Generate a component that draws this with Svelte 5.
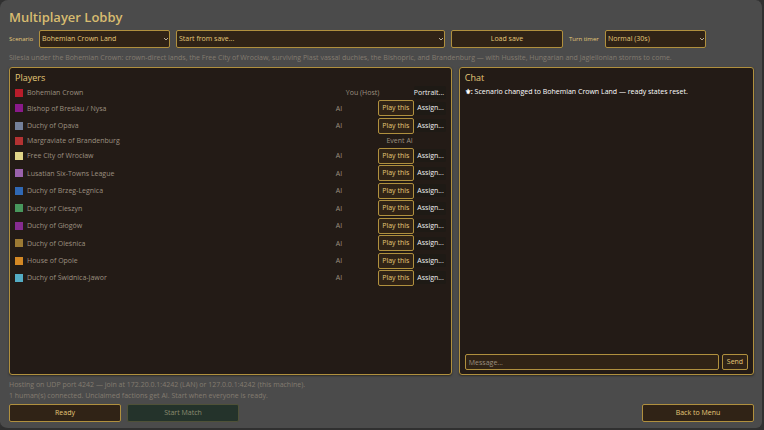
<script lang="ts">
  type Faction = { name: string; color: string; kind: 'host' | 'ai' | 'event' };

  const factions: Faction[] = [
    { name: 'Bohemian Crown', color: '#b81c2a', kind: 'host' },
    { name: 'Bishop of Breslau / Nysa', color: '#8a1a8a', kind: 'ai' },
    { name: 'Duchy of Opava', color: '#74809a', kind: 'ai' },
    { name: 'Margraviate of Brandenburg', color: '#b43232', kind: 'event' },
    { name: 'Free City of Wrocław', color: '#e0d488', kind: 'ai' },
    { name: 'Lusatian Six-Towns League', color: '#9a62ac', kind: 'ai' },
    { name: 'Duchy of Brzeg-Legnica', color: '#3068b4', kind: 'ai' },
    { name: 'Duchy of Cieszyn', color: '#48965c', kind: 'ai' },
    { name: 'Duchy of Głogów', color: '#862c90', kind: 'ai' },
    { name: 'Duchy of Oleśnica', color: '#9c7a34', kind: 'ai' },
    { name: 'House of Opole', color: '#d48824', kind: 'ai' },
    { name: 'Duchy of Świdnica-Jawor', color: '#54acc4', kind: 'ai' }
  ];

  const statusLabel = { host: 'You (Host)', ai: 'AI', event: 'Event AI' };

  let message = $state('');
</script>

{#snippet picker(id: string, value: string)}
  <div class="picker">
    <select {id} aria-label={value}><option>{value}</option></select>
    <svg viewBox="0 0 6 4" aria-hidden="true"><path d="M1 1l2 2 2-2" /></svg>
  </div>
{/snippet}

<main>
  <h1>Multiplayer Lobby</h1>

  <div class="setup">
    <label for="scenario">Scenario</label>
    <div class="scenario">{@render picker('scenario', 'Bohemian Crown Land')}</div>
    <div class="save">{@render picker('save', 'Start from save...')}</div>
    <button class="wide">Load save</button>
    <label class="timer-label" for="timer">Turn timer</label>
    <div class="timer">{@render picker('timer', 'Normal (30s)')}</div>
  </div>

  <p class="blurb">Silesia under the Bohemian Crown: crown-direct lands, the Free City of Wrocław, surviving Piast vassal duchies, the Bishopric, and Brandenburg — with Hussite, Hungarian and Jagiellonian storms to come.</p>

  <div class="panels">
    <section class="panel">
      <h2>Players</h2>
      <ul>
        {#each factions as f (f.name)}
          <li class={f.kind}>
            <span class="swatch" style="background: {f.color}"></span>
            <span class="name">{f.name}</span>
            <span class="status">{statusLabel[f.kind]}</span>
            {#if f.kind === 'ai'}
              <button class="play">Play this</button>
              <button class="flat">Assign...</button>
            {:else if f.kind === 'host'}
              <button class="flat">Portrait...</button>
            {/if}
          </li>
        {/each}
      </ul>
    </section>

    <section class="panel">
      <h2>Chat</h2>
      <p class="log"><b>⚜:</b> Scenario changed to Bohemian Crown Land — ready states reset.</p>
      <form onsubmit={(e) => e.preventDefault()}>
        <input type="text" placeholder="Message..." aria-label="Message" bind:value={message} />
        <button class="send">Send</button>
      </form>
    </section>
  </div>

  <div class="info">
    <p>Hosting on UDP port 4242 — join at 172.20.0.1:4242 (LAN) or 127.0.0.1:4242 (this machine).</p>
    <p>1 human(s) connected. Unclaimed factions get AI. Start when everyone is ready.</p>
  </div>

  <footer>
    <button class="wide">Ready</button>
    <button class="wide" disabled>Start Match</button>
    <button class="wide back">Back to Menu</button>
  </footer>
</main>

<style>
  :global(body) { background: #303030; }
  main {
    --gold: #b0903e;
    --gold-text: #e4c878;
    --muted: #9c9080;
    --field: #302316;
    box-sizing: border-box;
    display: flex;
    flex-direction: column;
    min-height: 100vh;
    padding: 8px 8px 6px 9px;
    border: solid #303030;
    border-width: 0 2px 2px 0;
    border-radius: 8px;
    background: #4b4b4b;
    color: var(--gold-text);
    font: 400 7px/10px 'Open Sans', 'Noto Sans', sans-serif;
  }
  h1, h2, p, ul { margin: 0; padding: 0; }
  h1 { color: #d8bc70; font-size: 13px; line-height: 18px; font-weight: 600; }
  h2 { font-size: 9px; line-height: 12px; font-weight: 400; }

  button, select, input {
    box-sizing: border-box;
    margin: 0;
    border: 1px solid var(--gold);
    border-radius: 2px;
    background: var(--field);
    color: var(--gold-text);
    font: inherit;
  }
  button { padding: 0; white-space: nowrap; }
  button:disabled { background: #24332b; border-color: #4f5138; color: #8c8c70; }
  .wide { width: 112px; height: 18px; }

  .setup { display: flex; align-items: center; gap: 6px; margin-top: 4px; }
  .setup label { width: 24px; font-size: 6px; white-space: nowrap; }
  .setup .timer-label { width: 30px; }
  .scenario { width: 131px; }
  .save { flex: 1; }
  .timer { width: 101px; margin-right: 48px; }
  .picker { position: relative; }
  .picker select { display: block; width: 100%; height: 18px; padding: 0 2px; appearance: none; }
  .picker svg {
    position: absolute;
    top: 7px;
    right: 1px;
    width: 6px;
    height: 4px;
    fill: none;
    stroke: #b8ac98;
    pointer-events: none;
  }

  .blurb, .info { color: #837b70; }
  .blurb { margin-top: 5px; }

  .panels { display: grid; flex: 1; grid-template-columns: 3fr 2fr; gap: 7px; margin-top: 4px; }
  .panel {
    box-sizing: border-box;
    display: flex;
    flex-direction: column;
    padding: 4px 5px;
    border: 1px solid var(--gold);
    border-radius: 3px;
    background: #231b16;
    box-shadow: 0 1px 2px #2c2a26;
  }

  ul {
    display: flex;
    flex-direction: column;
    justify-content: space-between;
    height: 200px;
    margin-top: 2px;
    list-style: none;
    color: var(--muted);
  }
  li { display: flex; align-items: center; height: 16px; }
  li.host { height: 13px; }
  li.event { height: 11px; }
  .swatch { width: 8px; height: 8px; margin-right: 4px; }
  .name, .status { padding-top: 1px; }
  .name { flex: 1; }
  .status { width: 38px; margin-right: 4px; }
  .host .status { width: 64px; }
  .event .status { width: auto; margin-right: 33px; }
  .play { width: 36px; height: 16px; }
  .flat {
    width: 32px;
    height: 13px;
    padding-right: 2px;
    border: 0;
    background: #1e1a15;
    color: #f0f0f0;
    text-align: right;
  }

  .log { flex: 1; margin-top: 3px; color: #fff; }
  form { display: flex; gap: 3px; }
  form input { flex: 1; min-width: 0; height: 16px; padding: 0 3px; }
  form input::placeholder { color: var(--muted); opacity: 1; }
  .send { width: 26px; height: 16px; }

  .info { margin-top: 4px; line-height: 11px; }
  footer { display: flex; gap: 6px; margin-top: 3px; }
  .back { margin-left: auto; }
</style>
